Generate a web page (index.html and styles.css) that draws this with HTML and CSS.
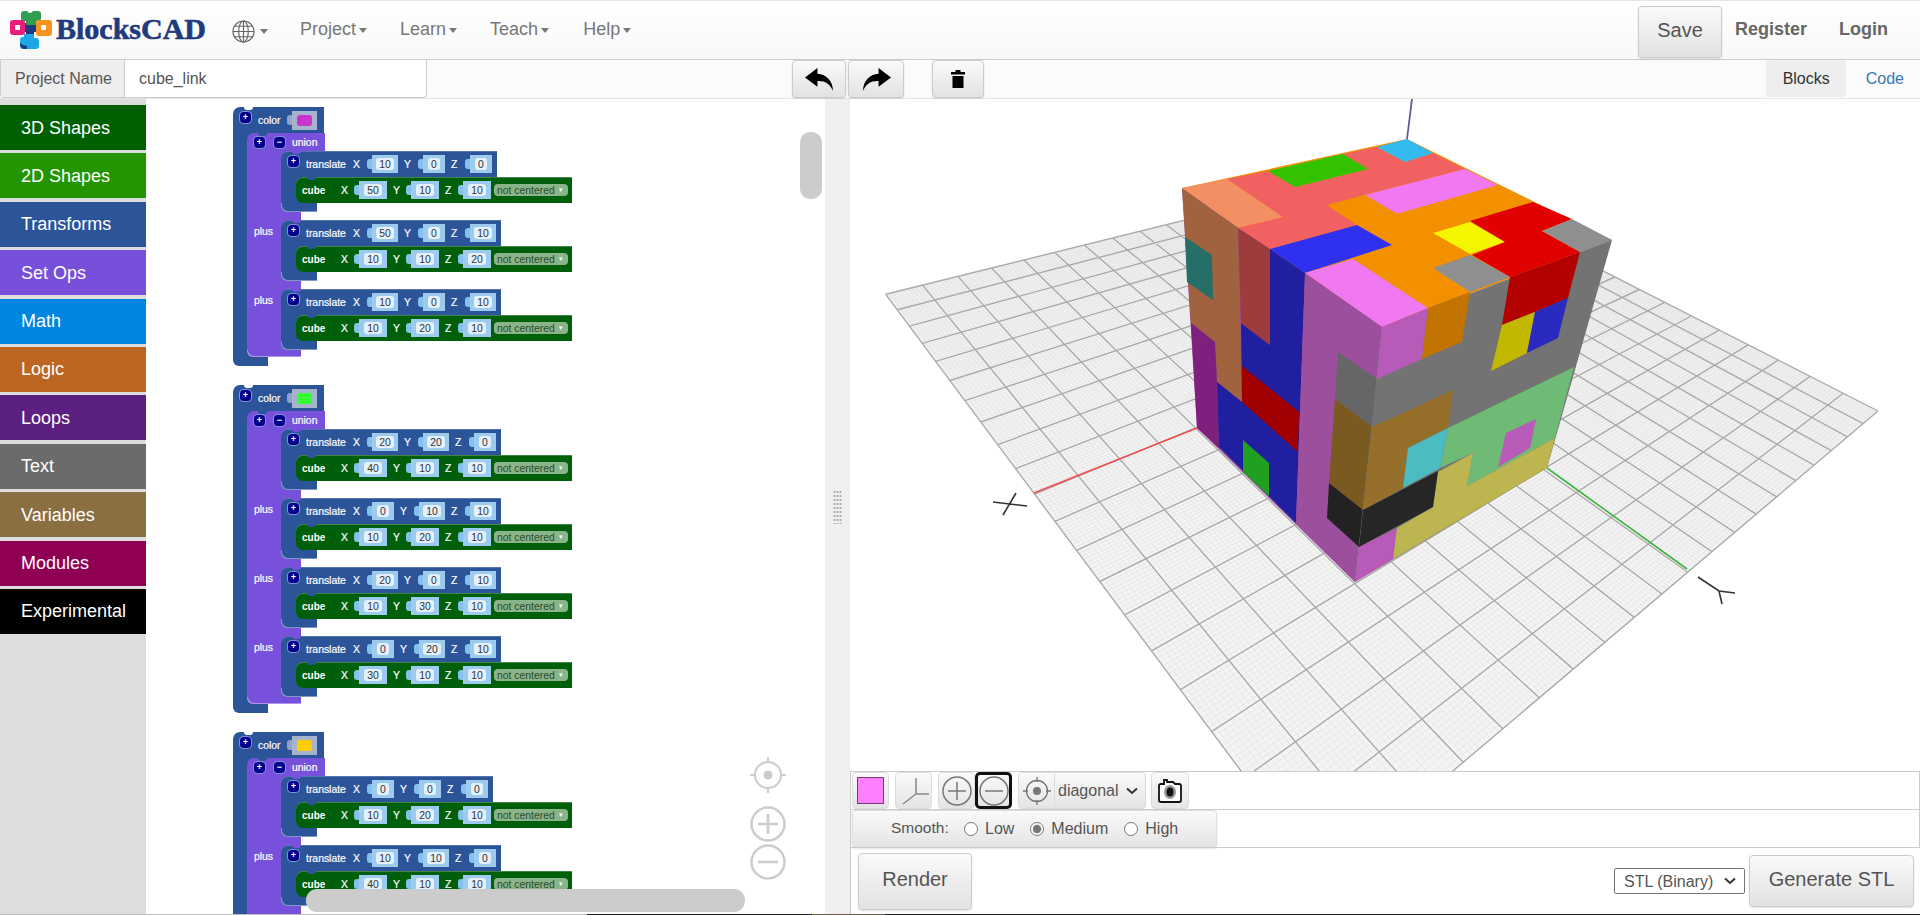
FILE: index.html
```html
<!DOCTYPE html>
<html lang="en">
<head>
<meta charset="utf-8">
<title>BlocksCAD</title>
<link rel="stylesheet" href="styles.css">
</head>
<body>
<header class="nav">
  <div class="logo">
    <svg class="logo-mark" viewBox="0 0 42 39" width="42" height="39">
      <path d="M12 13h16v9h-4v8h-8v-8h-4z" fill="#1f3a7d"/>
      <path d="M11 4q0-3 3-3h3q1 2 3 2t3-2h5q3 0 3 3v4q0 3-3 3h-2v4h-10v-4h-2q-3 0-3-3z" fill="#2f9e4f"/>
      <rect x="0" y="10" width="15" height="15" rx="3" fill="#e91e7b"/>
      <rect x="5" y="15" width="5" height="5" rx="1" fill="#fff"/>
      <rect x="26" y="10" width="16" height="16" rx="3" fill="#f7931e"/>
      <rect x="31" y="15" width="5" height="5" rx="1" fill="#fff"/>
      <path d="M14 24h10v4h2q3 0 3 3v5q0 3-3 3H13q-3 0-3-3v-6q0-3 3-3h1z" fill="#1ea7e8"/>
      <path d="M10 33q0 6 5 6h2v-3q-4 0-7-3z" fill="#1f3a7d"/>
    </svg>
    <span class="logo-text">BlocksCAD</span>
  </div>
  <div class="nav-item globe">
    <svg viewBox="0 0 24 24" width="23" height="23" fill="none" stroke="#666" stroke-width="1.2">
      <circle cx="12" cy="12" r="11"/><ellipse cx="12" cy="12" rx="5" ry="11"/><path d="M12 1v22M1 12h22M2.5 6.500h19M2.500 17.500h19"/>
    </svg>
    <i class="caret"></i>
  </div>
  <div class="nav-item project">Project<i class="caret"></i></div>
  <div class="nav-item">Learn<i class="caret"></i></div>
  <div class="nav-item">Teach<i class="caret"></i></div>
  <div class="nav-item help">Help<i class="caret"></i></div>
  <div class="nav-right">
    <button class="btn save">Save</button>
    <a class="nav-link reg">Register</a>
    <a class="nav-link login">Login</a>
  </div>
</header>

<div class="subbar">
  <div class="name-group">
    <span class="name-addon">Project Name</span>
    <span class="name-input">cube_link</span>
  </div>
  <button class="btn icon-btn undo"><svg viewBox="0 0 28 22" width="29" height="23"><path d="M12 0 0 9l12 9v-5.500c7-.5 12 2.500 15 9.500 0-9-6-16-15-16.500z"/></svg></button>
  <button class="btn icon-btn redo"><svg viewBox="0 0 28 22" width="29" height="23"><path d="M16 0l12 9-12 9v-5.500c-7-.5-12 2.500-15 9.500 0-9 6-16 15-16.500z"/></svg></button>
  <button class="btn icon-btn trash"><svg viewBox="0 0 14 18" width="14" height="18"><path d="M4.500 0h5v2H14v2.500H0V2h4.500zM1.500 6h11v12h-11z"/></svg></button>
  <div class="tabs">
    <span class="tab active">Blocks</span>
    <span class="tab code">Code</span>
  </div>
</div>

<main class="main">
  <nav class="cats">
    <a class="cat c3d">3D Shapes</a>
    <a class="cat c2d">2D Shapes</a>
    <a class="cat ctr">Transforms</a>
    <a class="cat cset">Set Ops</a>
    <a class="cat cmath">Math</a>
    <a class="cat clogic">Logic</a>
    <a class="cat cloops">Loops</a>
    <a class="cat ctext">Text</a>
    <a class="cat cvars">Variables</a>
    <a class="cat cmods">Modules</a>
    <a class="cat cexp">Experimental</a>
  </nav>

  <section class="workspace">
    <div class="color-block">
      <div class="c-head"><span class="tg">+</span><span class="w color-w">color</span><span class="swatch"><i class="sw-magenta"></i></span></div>
      <div class="c-body">
        <div class="union">
          <div class="u-head"><span class="tg">+</span><span class="tg minus">−</span><span class="w union-w">union</span></div>
          <div class="u-row">
            <div class="u-col"></div>
            <div class="tr">
              <div class="t-head"><span class="tg">+</span><span class="w t-w">translate</span><span class="l">X</span><span class="num"><i>10</i></span><span class="l">Y</span><span class="num one"><i>0</i></span><span class="l">Z</span><span class="num one"><i>0</i></span></div>
              <div class="t-body"><div class="cube"><span class="w cube-w">cube</span><span class="l">X</span><span class="num"><i>50</i></span><span class="l">Y</span><span class="num"><i>10</i></span><span class="l">Z</span><span class="num"><i>10</i></span><span class="drop">not centered<b>▾</b></span></div></div>
              <div class="t-foot"></div>
            </div>
          </div>
          <div class="u-sep"></div>
          <div class="u-row">
            <div class="u-col"><span class="plus">plus</span></div>
            <div class="tr">
              <div class="t-head"><span class="tg">+</span><span class="w t-w">translate</span><span class="l">X</span><span class="num"><i>50</i></span><span class="l">Y</span><span class="num one"><i>0</i></span><span class="l">Z</span><span class="num"><i>10</i></span></div>
              <div class="t-body"><div class="cube"><span class="w cube-w">cube</span><span class="l">X</span><span class="num"><i>10</i></span><span class="l">Y</span><span class="num"><i>10</i></span><span class="l">Z</span><span class="num"><i>20</i></span><span class="drop">not centered<b>▾</b></span></div></div>
              <div class="t-foot"></div>
            </div>
          </div>
          <div class="u-sep"></div>
          <div class="u-row">
            <div class="u-col"><span class="plus">plus</span></div>
            <div class="tr">
              <div class="t-head"><span class="tg">+</span><span class="w t-w">translate</span><span class="l">X</span><span class="num"><i>10</i></span><span class="l">Y</span><span class="num one"><i>0</i></span><span class="l">Z</span><span class="num"><i>10</i></span></div>
              <div class="t-body"><div class="cube"><span class="w cube-w">cube</span><span class="l">X</span><span class="num"><i>10</i></span><span class="l">Y</span><span class="num"><i>20</i></span><span class="l">Z</span><span class="num"><i>10</i></span><span class="drop">not centered<b>▾</b></span></div></div>
              <div class="t-foot"></div>
            </div>
          </div>
          <div class="u-foot"></div>
        </div>
      </div>
      <div class="c-foot"></div>
    </div>

    <div class="color-block">
      <div class="c-head"><span class="tg">+</span><span class="w color-w">color</span><span class="swatch"><i class="sw-green"></i></span></div>
      <div class="c-body">
        <div class="union">
          <div class="u-head"><span class="tg">+</span><span class="tg minus">−</span><span class="w union-w">union</span></div>
          <div class="u-row">
            <div class="u-col"></div>
            <div class="tr">
              <div class="t-head"><span class="tg">+</span><span class="w t-w">translate</span><span class="l">X</span><span class="num"><i>20</i></span><span class="l">Y</span><span class="num"><i>20</i></span><span class="l">Z</span><span class="num one"><i>0</i></span></div>
              <div class="t-body"><div class="cube"><span class="w cube-w">cube</span><span class="l">X</span><span class="num"><i>40</i></span><span class="l">Y</span><span class="num"><i>10</i></span><span class="l">Z</span><span class="num"><i>10</i></span><span class="drop">not centered<b>▾</b></span></div></div>
              <div class="t-foot"></div>
            </div>
          </div>
          <div class="u-sep"></div>
          <div class="u-row">
            <div class="u-col"><span class="plus">plus</span></div>
            <div class="tr">
              <div class="t-head"><span class="tg">+</span><span class="w t-w">translate</span><span class="l">X</span><span class="num one"><i>0</i></span><span class="l">Y</span><span class="num"><i>10</i></span><span class="l">Z</span><span class="num"><i>10</i></span></div>
              <div class="t-body"><div class="cube"><span class="w cube-w">cube</span><span class="l">X</span><span class="num"><i>10</i></span><span class="l">Y</span><span class="num"><i>20</i></span><span class="l">Z</span><span class="num"><i>10</i></span><span class="drop">not centered<b>▾</b></span></div></div>
              <div class="t-foot"></div>
            </div>
          </div>
          <div class="u-sep"></div>
          <div class="u-row">
            <div class="u-col"><span class="plus">plus</span></div>
            <div class="tr">
              <div class="t-head"><span class="tg">+</span><span class="w t-w">translate</span><span class="l">X</span><span class="num"><i>20</i></span><span class="l">Y</span><span class="num one"><i>0</i></span><span class="l">Z</span><span class="num"><i>10</i></span></div>
              <div class="t-body"><div class="cube"><span class="w cube-w">cube</span><span class="l">X</span><span class="num"><i>10</i></span><span class="l">Y</span><span class="num"><i>30</i></span><span class="l">Z</span><span class="num"><i>10</i></span><span class="drop">not centered<b>▾</b></span></div></div>
              <div class="t-foot"></div>
            </div>
          </div>
          <div class="u-sep"></div>
          <div class="u-row">
            <div class="u-col"><span class="plus">plus</span></div>
            <div class="tr">
              <div class="t-head"><span class="tg">+</span><span class="w t-w">translate</span><span class="l">X</span><span class="num one"><i>0</i></span><span class="l">Y</span><span class="num"><i>20</i></span><span class="l">Z</span><span class="num"><i>10</i></span></div>
              <div class="t-body"><div class="cube"><span class="w cube-w">cube</span><span class="l">X</span><span class="num"><i>30</i></span><span class="l">Y</span><span class="num"><i>10</i></span><span class="l">Z</span><span class="num"><i>10</i></span><span class="drop">not centered<b>▾</b></span></div></div>
              <div class="t-foot"></div>
            </div>
          </div>
          <div class="u-foot"></div>
        </div>
      </div>
      <div class="c-foot"></div>
    </div>

    <div class="color-block">
      <div class="c-head"><span class="tg">+</span><span class="w color-w">color</span><span class="swatch"><i class="sw-yellow"></i></span></div>
      <div class="c-body">
        <div class="union">
          <div class="u-head"><span class="tg">+</span><span class="tg minus">−</span><span class="w union-w">union</span></div>
          <div class="u-row">
            <div class="u-col"></div>
            <div class="tr">
              <div class="t-head"><span class="tg">+</span><span class="w t-w">translate</span><span class="l">X</span><span class="num one"><i>0</i></span><span class="l">Y</span><span class="num one"><i>0</i></span><span class="l">Z</span><span class="num one"><i>0</i></span></div>
              <div class="t-body"><div class="cube"><span class="w cube-w">cube</span><span class="l">X</span><span class="num"><i>10</i></span><span class="l">Y</span><span class="num"><i>20</i></span><span class="l">Z</span><span class="num"><i>10</i></span><span class="drop">not centered<b>▾</b></span></div></div>
              <div class="t-foot"></div>
            </div>
          </div>
          <div class="u-sep"></div>
          <div class="u-row">
            <div class="u-col"><span class="plus">plus</span></div>
            <div class="tr">
              <div class="t-head"><span class="tg">+</span><span class="w t-w">translate</span><span class="l">X</span><span class="num"><i>10</i></span><span class="l">Y</span><span class="num"><i>10</i></span><span class="l">Z</span><span class="num one"><i>0</i></span></div>
              <div class="t-body"><div class="cube"><span class="w cube-w">cube</span><span class="l">X</span><span class="num"><i>40</i></span><span class="l">Y</span><span class="num"><i>10</i></span><span class="l">Z</span><span class="num"><i>10</i></span><span class="drop">not centered<b>▾</b></span></div></div>
              <div class="t-foot"></div>
            </div>
          </div>
          <div class="u-sep"></div>
        </div>
      </div>
    </div>

    <div class="ws-zoom">
      <svg viewBox="0 0 36 36" width="36" height="36" fill="none" stroke="#ccc" stroke-width="2"><circle cx="18" cy="18" r="13"/><circle cx="18" cy="18" r="4.500" fill="#ccc" stroke="none"/><path d="M18 0v5M18 31v5M0 18h5M31 18h5"/></svg>
      <svg class="zoom-plus" viewBox="0 0 36 36" width="36" height="36" fill="none" stroke="#ccc" stroke-width="2.500"><circle cx="18" cy="18" r="16.500"/><path d="M8 18h20M18 8v20"/></svg>
      <svg class="zoom-minus" viewBox="0 0 36 36" width="36" height="36" fill="none" stroke="#ccc" stroke-width="2.500"><circle cx="18" cy="18" r="16.500"/><path d="M8 18h20"/></svg>
    </div>
    <div class="vscroll"></div>
    <div class="hscroll"></div>
  </section>

  <div class="splitter"><i class="grip"></i></div>

  <section class="viewer">
    <div class="canvas3d">
      <svg class="scene" viewBox="850 99 1070 672" width="1070" height="672">
        <polygon id="plate" fill="#f4f4f4" points="885.700,294.300 1399,167 1878,411 1323,881"/>
        <path id="grid-minor" fill="none" stroke="#dcdcdc" stroke-width=".5"/>
        <path id="grid-major" fill="none" stroke="#aaa" stroke-width="1.400"/>
        <path d="M1034 493 1197 428" stroke="#f05050" stroke-width="1.600" fill="none"/>
        <path d="M1547 468 1687 569" stroke="#3cb43c" stroke-width="1.600" fill="none"/>
        <path d="M1412 99 1407 139" stroke="#5a5aa0" stroke-width="1.800" fill="none"/>
        <path d="M993 502 1027 506M1016 493 1003 515" stroke="#333" stroke-width="1.600" fill="none"/>
        <path d="M1698 577 1719 591 1735 593M1719 591 1722 604" stroke="#333" stroke-width="1.600" fill="none"/>

        <polygon fill="#f29000" points="1182,188 1407,139 1612,240 1382,327"/>
        <polygon fill="#9c4f9c" points="1182,188 1382,327 1355,582 1197,428"/>
        <polygon fill="#f28f63" points="1182,188 1227,179 1283,217 1238,228"/>
        <polygon fill="#f26161" points="1227,179 1268,171 1295,187 1368,169 1343,154 1377,147 1405,162 1433,153 1465,169 1365,195 1327,205 1357,225 1270,249 1238,228 1283,217"/>
        <polygon fill="#33c200" points="1268,171 1343,154 1368,169 1295,187"/>
        <polygon fill="#33bbf0" points="1377,147 1407,139 1433,153 1405,162"/>
        <polygon fill="#f078f0" points="1465,169 1498,185 1397,214 1365,195"/>
        <polygon fill="#f29000" points="1498,185 1533,202 1470,221 1433,233 1470,255 1433,268 1470,292 1428,308 1353,259 1392,245 1357,225 1327,205 1365,195 1397,214"/>
        <polygon fill="#f5f500" points="1433,233 1470,222 1505,242 1470,254"/>
        <polygon fill="#e00000" points="1470,221 1533,202 1572,219 1542,231 1580,252 1510,277 1472,255 1505,242"/>
        <polygon fill="#8f8f8f" points="1542,231 1572,219 1612,240 1580,252"/>
        <polygon fill="#8f8f8f" points="1433,268 1470,255 1510,277 1470,292"/>
        <polygon fill="#3030f0" points="1270,249 1357,225 1392,245 1305,273"/>
        <polygon fill="#f078f0" points="1305,273 1353,259 1428,308 1382,327"/>

        <polygon fill="#a0623f" points="1182,188 1238,228 1242,402 1217,382 1215,342 1191,323"/>
        <polygon fill="#7f207f" points="1191,323 1215,342 1217,382 1219,448 1197,428"/>
        <polygon fill="#266e68" points="1185,237 1212,255 1213,300 1187,282"/>
        <polygon fill="#1f1fa0" points="1270,249 1305,273 1296,523 1219,447 1217,382 1242,402 1241,323 1270,345"/>
        <polygon fill="#9c3c3c" points="1238,228 1270,249 1270,345 1241,323"/>
        <polygon fill="#a00000" points="1242,366 1299,412 1298,452 1242,402"/>
        <polygon fill="#20a020" points="1243,440 1269,463 1269,496 1243,472"/>
        <polygon fill="#9c4f9c" points="1305,273 1382,327 1355,582 1296,523"/>
        <polygon fill="#666" points="1338,352 1377,379 1372,427 1335,399"/>
        <polygon fill="#7a5a20" points="1335,399 1372,427 1363,510 1329,483"/>
        <polygon fill="#222" points="1329,483 1363,510 1359,547 1327,518"/>

        <polygon fill="#737373" points="1382,327 1612,240 1547,468 1355,582"/>
        <polygon fill="#b85ab8" points="1382,327 1428,308 1422,359 1377,379"/>
        <polygon fill="#b85ab8" points="1359,547 1397,528 1393,559 1355,582"/>
        <polygon fill="#c27400" points="1428,308 1470,292 1462,342 1422,359"/>
        <polygon fill="#b30000" points="1510,277 1580,252 1568,298 1535,312 1502,325"/>
        <polygon fill="#c2b800" points="1502,325 1535,312 1527,353 1491,371"/>
        <polygon fill="#2a2ac0" points="1535,312 1568,298 1558,338 1527,353"/>
        <polygon fill="#96702a" points="1372,427 1453,390 1448,428 1408,448 1403,488 1363,510"/>
        <polygon fill="#6fba75" points="1448,428 1574,367 1555,438 1467,486 1473,453 1440,468"/>
        <polygon fill="#b85ab8" points="1506,433 1536,419 1530,448 1498,467"/>
        <polygon fill="#4bbcc2" points="1408,448 1448,428 1440,468 1403,488"/>
        <polygon fill="#bdb54f" points="1438,472 1473,453 1467,486 1555,438 1547,468 1393,559 1397,528 1433,507"/>
        <polygon fill="#262626" points="1363,510 1438,471 1433,507 1359,547"/>
      </svg>
    </div>

    <div class="tool-row">
      <button class="tool t-swatch"><i class="cur-color"></i></button>
      <button class="tool t-axes"><svg viewBox="0 0 30 28" width="30" height="28" fill="none" stroke="#888" stroke-width="1.500"><path d="M17 1v16h15M17 17 4 27"/></svg></button>
      <div class="tool-pair">
        <button class="tool"><svg viewBox="0 0 30 30" width="30" height="30" fill="none" stroke="#777" stroke-width="1.500"><circle cx="15" cy="15" r="14"/><path d="M6 15h18M15 6v18"/></svg></button>
        <button class="tool focused"><svg viewBox="0 0 30 30" width="30" height="30" fill="none" stroke="#777" stroke-width="1.500"><circle cx="15" cy="15" r="14"/><path d="M6 15h18"/></svg></button>
      </div>
      <div class="tool-pair view-pair">
        <button class="tool"><svg viewBox="0 0 30 30" width="30" height="30" fill="none" stroke="#777" stroke-width="1.300"><circle cx="15" cy="15" r="10.500"/><circle cx="15" cy="15" r="4" fill="#777" stroke="none"/><path d="M15 1v5M15 24v5M1 15h5M24 15h5"/></svg></button>
        <div class="view-select">
          <select class="sel"><option>diagonal</option></select>
          <svg class="chev" viewBox="0 0 12 8" width="12" height="8"><path d="M1 1.500 6 6l5-4.500"/></svg>
        </div>
      </div>
      <button class="tool t-camera"><svg viewBox="0 0 24 25" width="24" height="25"><path d="M6 2h3v2h6l2 2h4q2 0 2 2v14q0 2-2 2H3q-2 0-2-2V8q0-2 2-2h3z" fill="#fff" stroke="#111" stroke-width="1.800"/><ellipse cx="12" cy="14" rx="6" ry="7" fill="#999"/><ellipse cx="12" cy="14" rx="3.500" ry="4.500" fill="#111"/></svg></button>
    </div>

    <div class="tool-row smooth-row">
      <div class="smooth">
        <span class="smooth-label">Smooth:</span>
        <label class="opt"><input type="radio" name="s">Low</label>
        <label class="opt"><input type="radio" name="s" checked>Medium</label>
        <label class="opt"><input type="radio" name="s">High</label>
      </div>
    </div>

    <div class="tool-row render-row">
      <button class="btn big render">Render</button>
      <div class="stl-wrap">
        <select class="sel stl"><option>STL (Binary)</option></select>
        <svg class="chev" viewBox="0 0 12 8" width="12" height="8"><path d="M1 1.500 6 6l5-4.500"/></svg>
      </div>
      <button class="btn big generate">Generate STL</button>
    </div>
  </section>
</main>
<div class="strip"></div>
<script src="grid.js"></script>
</body>
</html>
```

FILE: styles.css
```css
* { box-sizing: border-box; }
html, body { margin: 0; height: 100%; }
body {
  display: flex;
  flex-direction: column;
  height: 915px;
  overflow: hidden;
  background: #fff;
  color: #555;
  font-family: "Liberation Sans", Arial, sans-serif;
  font-size: 16px;
}
button { font-family: inherit; }

.nav {
  display: flex;
  align-items: center;
  height: 60px;
  flex: none;
  padding-left: 10px;
  border-top: 1px solid #e7e7e7;
  border-bottom: 1px solid #ccc;
  background: linear-gradient(#fff, #f8f8f8);
  font-size: 18px;
  color: #777;
}
.logo { display: flex; align-items: center; margin-top: -2px; }
.logo-mark { flex: none; }
.logo-text {
  margin-left: 4px;
  font-family: "Liberation Serif", serif;
  font-weight: 700;
  font-size: 30px;
  color: #1f3a7d;
  -webkit-text-stroke: .6px #1f3a7d;
}
.nav-item { display: flex; align-items: center; margin-left: 33px; margin-top: -1px; }
.nav-item.project { margin-left: 32px; }
.nav-item.help { margin-left: 34px; }
.globe { margin-left: 26px; margin-top: 2px; }
.caret {
  width: 0; height: 0;
  margin-left: 3px; margin-top: 2px;
  border-top: 5px solid #777;
  border-left: 4.500px solid transparent;
  border-right: 4.500px solid transparent;
}
.globe .caret { margin-left: 5px; margin-top: 0; }
.nav-right { display: flex; align-items: center; margin-left: auto; padding-right: 32px; }
.nav-link { font-weight: 700; color: #666; margin-top: -1px; }
.nav-link.login { margin-left: 32px; }
.nav-link.reg { margin-left: 13px; }

.btn {
  border: 1px solid #ccc;
  border-radius: 4px;
  background: linear-gradient(#fafafa, #e2e2e2);
  color: #555;
  box-shadow: 0 1px 2px rgba(0,0,0,.12);
  padding: 0;
}
.save { width: 84px; height: 52px; font-size: 20px; margin-top: 3px; padding-bottom: 2px; }

.subbar {
  display: flex;
  align-items: stretch;
  height: 39px;
  flex: none;
  background: #fbfbfb;
  border-bottom: 1px solid #e4e4e4;
}
.name-group {
  display: flex;
  width: 427px;
  height: 38px;
  border: 1px solid #ccc;
  border-top: 0;
  border-radius: 0 0 4px 4px;
  background: #fff;
}
.name-addon {
  display: flex; align-items: center;
  width: 124px;
  padding: 1px 0 0 14px;
  background: #eee;
  border-right: 1px solid #ccc;
}
.name-input { display: flex; align-items: center; padding: 1px 0 0 14px; }
.icon-btn { display: flex; align-items: center; justify-content: center; height: 38px; }
.icon-btn svg { fill: #000; }
.undo { width: 54px; margin-left: 365px; }
.redo { width: 56px; margin-left: 2px; }
.trash { width: 52px; margin-left: 28px; }
.tabs { display: flex; margin-left: auto; height: 37px; }
.tab { display: flex; align-items: center; padding: 0 16px 0 17px; color: #333; border-radius: 4px; }
.tab.active { background: #eee; }
.tab.code { color: #337ab7; padding: 0 16px 0 20px; }

.main { display: flex; flex: 1; min-height: 0; }
.cats {
  display: flex;
  flex-direction: column;
  gap: 3.400px;
  width: 146px;
  flex: none;
  padding-top: 6px;
  background: #ddd;
}
.cat {
  display: flex; align-items: center;
  height: 45px;
  flex: none;
  padding: 1px 0 0 21px;
  font-size: 18px;
  color: #fff;
}
.c3d { background: #006000; }
.c2d { background: #249400; }
.ctr { background: #2b5499; }
.cset { background: #774fdb; }
.cmath { background: #0085e0; }
.clogic { background: #bd6622; }
.cloops { background: #5b2080; }
.ctext { background: #6b6b6b; }
.cvars { background: #8a6f42; }
.cmods { background: #8f0055; }
.cexp { background: #000; }

/* Blockly workspace */
.workspace {
  position: relative;
  width: 679px;
  flex: none;
  overflow: hidden;
  padding: 8px 0 0 87px;
  background: #fff;
  font-size: 10.400px;
  color: #fff;
  --blue: #2b5499;
  --purple: #7750dc;
  --green: #005f0a;
}
.color-block { width: max-content; margin-bottom: 19px; }
.c-head {
  position: relative;
  display: flex; align-items: center;
  width: 91px; height: 26px;
  padding-left: 7px;
  background: var(--blue);
  border-radius: 7px 0 0 0;
}
.c-head::before, .u-head::before, .t-head::before, .cube::before {
  content: "";
  position: absolute;
  top: 0; left: 11px;
  width: 9px; height: 3px;
  border-radius: 0 0 5px 5px;
}
.c-head::before { background: #fff; }
.u-head::before { background: var(--blue); }
.t-head::before { background: var(--purple); }
.cube::before { background: var(--blue); }
.tg {
  display: flex; align-items: center; justify-content: center;
  width: 11px; height: 11px;
  flex: none;
  border-radius: 3px;
  background: #00008b;
  outline: 1px solid #7f8fd8;
  font-size: 9px;
  font-weight: 700;
  line-height: 1;
}
.c-head .tg { margin-top: -5px; }
.t-head .tg { margin-top: -6px; }
.w, .l, .plus { -webkit-text-stroke: .2px #fff; }
.color-w { margin-left: 7px; width: 29px; }
.swatch {
  position: relative;
  display: flex; align-items: center; justify-content: center;
  width: 25px; height: 19px;
  margin-left: 5px;
  background: #a5b3cc;
}
.swatch::before {
  content: "";
  position: absolute;
  left: -5px; top: 4px;
  width: 5px; height: 10px;
  background: #8fa4c8;
  border-radius: 3px 0 0 3px;
}
.swatch i { width: 15px; height: 11px; border-radius: 3px; }
.sw-magenta { background: #cc33cc; }
.sw-green { background: #33ff33; }
.sw-yellow { background: #ffcc00; }

.c-body {
  padding-left: 14px;
  background: linear-gradient(to right, var(--blue) 24px, transparent 24px);
}
.c-foot {
  width: 35px; height: 9px;
  background: var(--blue);
  border-radius: 0 0 0 6px;
}
.u-head {
  position: relative;
  display: flex; align-items: center;
  width: 78px; height: 18px;
  padding-left: 7px;
  background: var(--purple);
  border-radius: 7px 0 0 0;
}
.minus { margin-left: 9px; }
.union-w { margin-left: 7px; }
.u-row {
  display: flex;
  background: linear-gradient(to right, var(--purple) 44px, transparent 44px);
}
.u-col { position: relative; width: 34px; flex: none; background: var(--purple); }
.plus { position: absolute; left: 7px; top: 6px; }
.u-sep { width: 54px; height: 8px; background: var(--purple); }
.u-foot {
  width: 54px; height: 7px;
  background: var(--purple);
  border-radius: 0 0 0 6px;
  box-shadow: inset 1px -1px 0 rgba(255,255,255,.4);
}
.t-head {
  position: relative;
  display: flex; align-items: center;
  width: max-content; height: 26px;
  padding: 0 5px 0 7px;
  background: var(--blue);
  border-radius: 7px 0 0 0;
  box-shadow: inset 0 1px 0 rgba(255,255,255,.2);
}
.t-w { margin-left: 7px; width: 40px; margin-right: 1px; }
.l { width: 7px; margin-left: 6px; flex: none; }
.num {
  position: relative;
  display: flex; align-items: center; justify-content: center;
  width: 26px; height: 18px;
  margin-left: 12px;
  flex: none;
  background: #9ccbee;
  color: #333;
}
.num::before {
  content: "";
  position: absolute;
  left: -5px; top: 4px;
  width: 5px; height: 10px;
  background: #86c0ec;
  border-radius: 3px 0 0 3px;
}
.num i {
  display: flex; align-items: center; justify-content: center;
  width: 18px; height: 12px;
  font-style: normal;
  background: #e2f1fc;
  border-radius: 3px;
}
.num.one { width: 22px; }
.num.one i { width: 12px; }
.t-body {
  padding-left: 15px;
  background: linear-gradient(to right, var(--blue) 25px, transparent 25px);
}
.cube {
  position: relative;
  display: flex; align-items: center;
  width: max-content; height: 26px;
  padding: 0 4px 0 6px;
  background: var(--green);
  border-radius: 7px 0 0 7px;
  box-shadow: inset 0 1px 0 rgba(255,255,255,.25);
}
.cube-w { font-weight: 700; font-size: 10px; width: 23px; margin-right: 10px; -webkit-text-stroke: 0; }
.cube .num { width: 28px; margin-left: 11px; }
.drop {
  position: relative;
  display: flex; align-items: center;
  width: 74px; height: 12px;
  margin-left: 3px;
  padding-left: 3px;
  border-radius: 4px;
  background: #8ab58a;
  color: #2c4a2c;
}
.drop b { position: absolute; right: 5px; top: 0; color: #fff; font-size: 7px; font-weight: 400; line-height: 11px; }
.t-foot {
  width: 36px; height: 9px;
  background: var(--blue);
  border-radius: 0 0 0 6px;
  box-shadow: inset 1px -1px 0 rgba(255,255,255,.4);
}
.ws-zoom {
  position: absolute;
  left: 604px; top: 658px;
  display: flex; flex-direction: column;
}
.ws-zoom svg { display: block; }
.zoom-plus { margin-top: 13px; }
.zoom-minus { margin-top: 2px; }
.vscroll {
  position: absolute;
  left: 654px; top: 33px;
  width: 22px; height: 67px;
  border-radius: 10px;
  background: #ccc;
}
.hscroll {
  position: absolute;
  left: 160px; top: 790px;
  width: 439px; height: 23px;
  border-radius: 11px;
  background: #ccc;
}

.splitter {
  display: flex; align-items: center; justify-content: center;
  width: 25px;
  flex: none;
  background: #f0f0f0;
}
.grip {
  width: 9px; height: 34px;
  background-image: radial-gradient(circle, #aaa 1px, transparent 1.200px);
  background-size: 3px 4px;
}

.viewer {
  display: flex; flex-direction: column;
  flex: 1; min-width: 0;
  border-left: 1px solid #ccc;
}
.canvas3d { height: 672px; flex: none; margin-left: -1px; overflow: hidden; background: #fff; }
.scene { display: block; }
.tool-row {
  display: flex; align-items: center;
  height: 38px; flex: none;
  padding-left: 1px;
  border-top: 1px solid #ccc;
  border-right: 1px solid #ccc;
}
.tool {
  display: flex; align-items: center; justify-content: center;
  width: 37px; height: 37px;
  padding: 0;
  border: 1px solid #ddd;
  border-radius: 4px;
  background: linear-gradient(#fafafa, #e4e4e4);
}
.t-swatch { width: 37px; }
.cur-color {
  width: 27px; height: 27px;
  background: #ff80ff;
  border: 1px solid #7a3a7a;
}
.t-axes { margin-left: 6px; }
.tool-pair { display: flex; margin-left: 6px; }
.focused { border: 3px solid #111; border-radius: 5px; }
.view-pair .tool { border-radius: 4px 0 0 4px; }
.view-select {
  position: relative;
  display: flex; align-items: center;
  width: 91px; height: 37px;
  border: 1px solid #ddd;
  border-left: 0;
  border-radius: 0 4px 4px 0;
  background: linear-gradient(#fafafa, #e4e4e4);
}
.sel {
  appearance: none;
  font-family: inherit;
  font-size: 16px;
  color: #555;
}
.view-select .sel {
  width: 90px; height: 32px;
  border: 0;
  background: transparent;
  padding: 0 0 0 3px;
}
.chev {
  position: absolute;
  top: 50%;
  margin-top: -4px;
  fill: none;
  stroke: #333;
  stroke-width: 2;
  pointer-events: none;
}
.view-select .chev { left: 71px; }
.t-camera { width: 38px; margin-left: 5px; }

.smooth-row { align-items: flex-start; }
.smooth {
  display: flex; align-items: center;
  width: 365px; height: 38px;
  padding-left: 38px;
  border: 1px solid #ddd;
  border-radius: 4px;
  background: linear-gradient(#fafafa, #e4e4e4);
  box-shadow: 0 1px 2px rgba(0,0,0,.12);
}
.smooth-label { font-size: 15.500px; width: 57px; margin-top: -2px; }
.opt { display: flex; align-items: center; gap: 7.500px; margin-left: 15.500px; }
.opt input { width: 14px; height: 14px; margin: 0; accent-color: #777; }

.render-row {
  flex: 1;
  height: auto;
  padding: 0 6px 0 7px;
  border-right: 0;
}
.big { font-size: 20px; height: 52px; padding-bottom: 3px; }
.render { width: 114px; height: 57px; }
.stl-wrap { position: relative; margin-left: auto; display: flex; }
.stl {
  width: 131px; height: 26px;
  background: #fff;
  border: 1px solid #767676;
  border-radius: 2px;
  padding: 0 0 0 9px;
}
.stl-wrap .chev { left: 110px; }
.generate { width: 165px; margin-left: 4px; }

.strip {
  height: 1px; flex: none;
  background: linear-gradient(to right, #bbb 587px, #222 587px, #222 812px, #6b5a4a 812px, #6b5a4a 885px, #222 885px);
}
```

FILE: grid.js
```javascript
// Perspective build plate: 200 x 200 units, major line every 10, minor line every 1.
(function () {
  var A = [885.7, 294.3], B = [1399, 167], C = [1878, 411], D = [1323, 881];
  var sx = A[0] - B[0] + C[0] - D[0], sy = A[1] - B[1] + C[1] - D[1];
  var dx1 = B[0] - C[0], dx2 = D[0] - C[0], dy1 = B[1] - C[1], dy2 = D[1] - C[1];
  var den = dx1 * dy2 - dx2 * dy1;
  var g = (sx * dy2 - dx2 * sy) / den, h = (dx1 * sy - sx * dy1) / den;
  var a = B[0] - A[0] + g * B[0], b = D[0] - A[0] + h * D[0], c = A[0];
  var d = B[1] - A[1] + g * B[1], e = D[1] - A[1] + h * D[1], f = A[1];

  function pt(u, v) {
    var w = g * u + h * v + 1;
    return ((a * u + b * v + c) / w).toFixed(1) + " " + ((d * u + e * v + f) / w).toFixed(1);
  }
  function lines(n, skip) {
    var out = [];
    for (var i = 0; i <= n; i++) {
      if (skip && i % skip === 0) continue;
      var t = i / n;
      out.push("M" + pt(t, 0) + "L" + pt(t, 1));
      out.push("M" + pt(0, t) + "L" + pt(1, t));
    }
    return out.join("");
  }
  document.getElementById("grid-minor").setAttribute("d", lines(200, 10));
  document.getElementById("grid-major").setAttribute("d", lines(20, 0));
})();
```
